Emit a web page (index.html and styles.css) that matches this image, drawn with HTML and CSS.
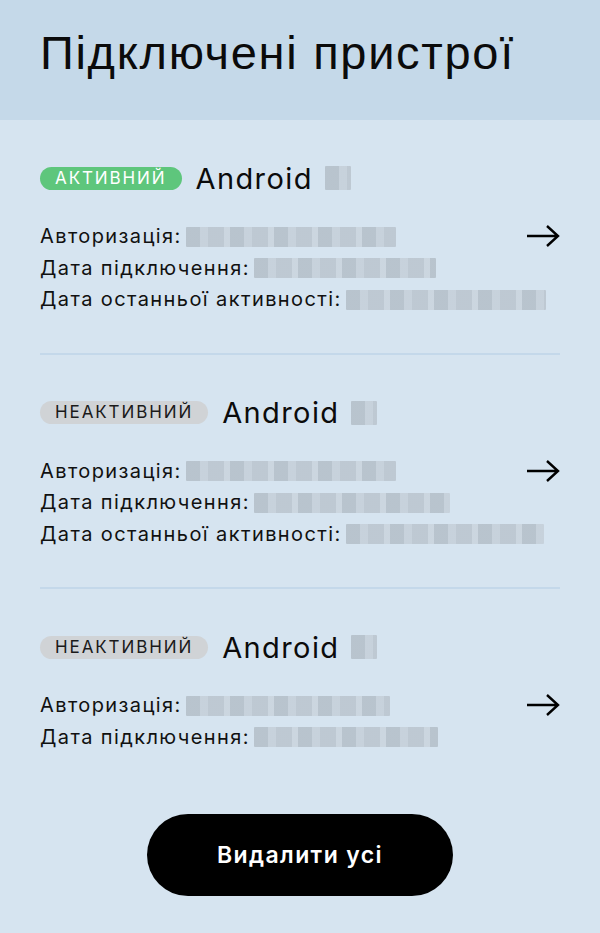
FILE: index.html
```html
<!DOCTYPE html>
<html lang="uk">
<head>
<meta charset="utf-8">
<link rel="stylesheet" href="styles.css">
</head>
<body>
<header class="top">
  <h1 class="title">Підключені пристрої</h1>
</header>
<main class="list">
  <section class="device">
    <div class="head">
      <span class="badge badge-on">АКТИВНИЙ</span>
      <span class="name">Android</span>
      <span class="blur blur-sq"></span>
    </div>
    <div class="body">
      <div class="rows">
        <div class="row">Авторизація: <span class="blur" style="width:210px"></span></div>
        <div class="row">Дата підключення: <span class="blur" style="width:182px"></span></div>
        <div class="row">Дата останньої активності: <span class="blur" style="width:200px"></span></div>
      </div>
      <svg class="arrow" viewBox="0 0 34 24" width="34" height="24"><path d="M1 12H32M21 2L32 12L21 22" fill="none" stroke="#000" stroke-width="2.4"/></svg>
    </div>
  </section>
  <section class="device">
    <div class="head">
      <span class="badge badge-off">НЕАКТИВНИЙ</span>
      <span class="name">Android</span>
      <span class="blur blur-sq"></span>
    </div>
    <div class="body">
      <div class="rows">
        <div class="row">Авторизація: <span class="blur" style="width:210px"></span></div>
        <div class="row">Дата підключення: <span class="blur" style="width:196px"></span></div>
        <div class="row">Дата останньої активності: <span class="blur" style="width:198px"></span></div>
      </div>
      <svg class="arrow" viewBox="0 0 34 24" width="34" height="24"><path d="M1 12H32M21 2L32 12L21 22" fill="none" stroke="#000" stroke-width="2.4"/></svg>
    </div>
  </section>
  <section class="device last">
    <div class="head">
      <span class="badge badge-off">НЕАКТИВНИЙ</span>
      <span class="name">Android</span>
      <span class="blur blur-sq"></span>
    </div>
    <div class="body">
      <div class="rows">
        <div class="row">Авторизація: <span class="blur" style="width:204px"></span></div>
        <div class="row">Дата підключення: <span class="blur" style="width:184px"></span></div>
      </div>
      <svg class="arrow" viewBox="0 0 34 24" width="34" height="24"><path d="M1 12H32M21 2L32 12L21 22" fill="none" stroke="#000" stroke-width="2.4"/></svg>
    </div>
  </section>
  <div class="actions">
    <button class="btn">Видалити усі</button>
  </div>
</main>
</body>
</html>
```
FILE: styles.css
```css
* { box-sizing: border-box; }
html, body { margin: 0; padding: 0; }
body {
  width: 600px;
  min-height: 933px;
  background: #d6e4f0;
  font-family: "Inter", "Liberation Sans", sans-serif;
  color: #111;
}
.top {
  background: #c5d9e9;
  height: 120px;
  padding: 0 40px;
  display: flex;
  align-items: center;
}
.title {
  margin: 0;
  font-family: "Liberation Sans", Arial, sans-serif;
  font-weight: 400;
  font-size: 47px;
  color: #0b0b0b;
  letter-spacing: 1.7px;
  position: relative;
  top: -8px;
}
.list {
  padding: 0 40px;
}
.device {
  padding: 46px 0 37px;
  border-bottom: 2px solid #c4d8ea;
}
.device.last {
  border-bottom: none;
  padding-bottom: 0;
}
.head {
  display: flex;
  align-items: center;
  gap: 14px;
  height: 24px;
}
.badge {
  display: inline-flex;
  align-items: center;
  height: 23px;
  padding: 0 15px;
  border-radius: 12px;
  font-size: 17px;
  letter-spacing: 1.9px;
  line-height: 1;
}
.badge-on { background: #5ec67c; color: #fff; }
.badge-off { background: #d0d3d6; color: #1a1a1a; }
.name {
  font-size: 29px;
  letter-spacing: 1.4px;
  color: #0b0b0b;
}
.blur {
  display: inline-block;
  flex-shrink: 0;
  height: 20px;
  vertical-align: middle;
  background:
    repeating-linear-gradient(90deg, rgba(150,162,172,0.35) 0 14px, rgba(190,200,210,0.3) 14px 22px, rgba(160,170,180,0.3) 22px 38px, rgba(205,214,222,0.2) 38px 44px),
    #cbd6e0;
  border-radius: 1px;
}
.blur-sq { width: 26px; height: 24px; margin-left: -2px; }
.body {
  margin-top: 31px;
  display: flex;
  justify-content: space-between;
  align-items: flex-start;
}
.rows {
  flex: 1;
  min-width: 0;
  display: flex;
  flex-direction: column;
}
.row {
  font-size: 20px;
  line-height: 31.5px;
  letter-spacing: 1.4px;
  display: flex;
  align-items: center;
  gap: 4px;
  white-space: nowrap;
}
.arrow {
  flex-shrink: 0;
  margin-top: 3px;
}
.actions {
  display: flex;
  justify-content: center;
  padding-top: 61px;
}
.btn {
  width: 306px;
  height: 82px;
  border: none;
  border-radius: 41px;
  background: #000;
  color: #fff;
  font-family: "Inter", "Liberation Sans", sans-serif;
  font-weight: 600;
  font-size: 23px;
  letter-spacing: 1.4px;
}
```
